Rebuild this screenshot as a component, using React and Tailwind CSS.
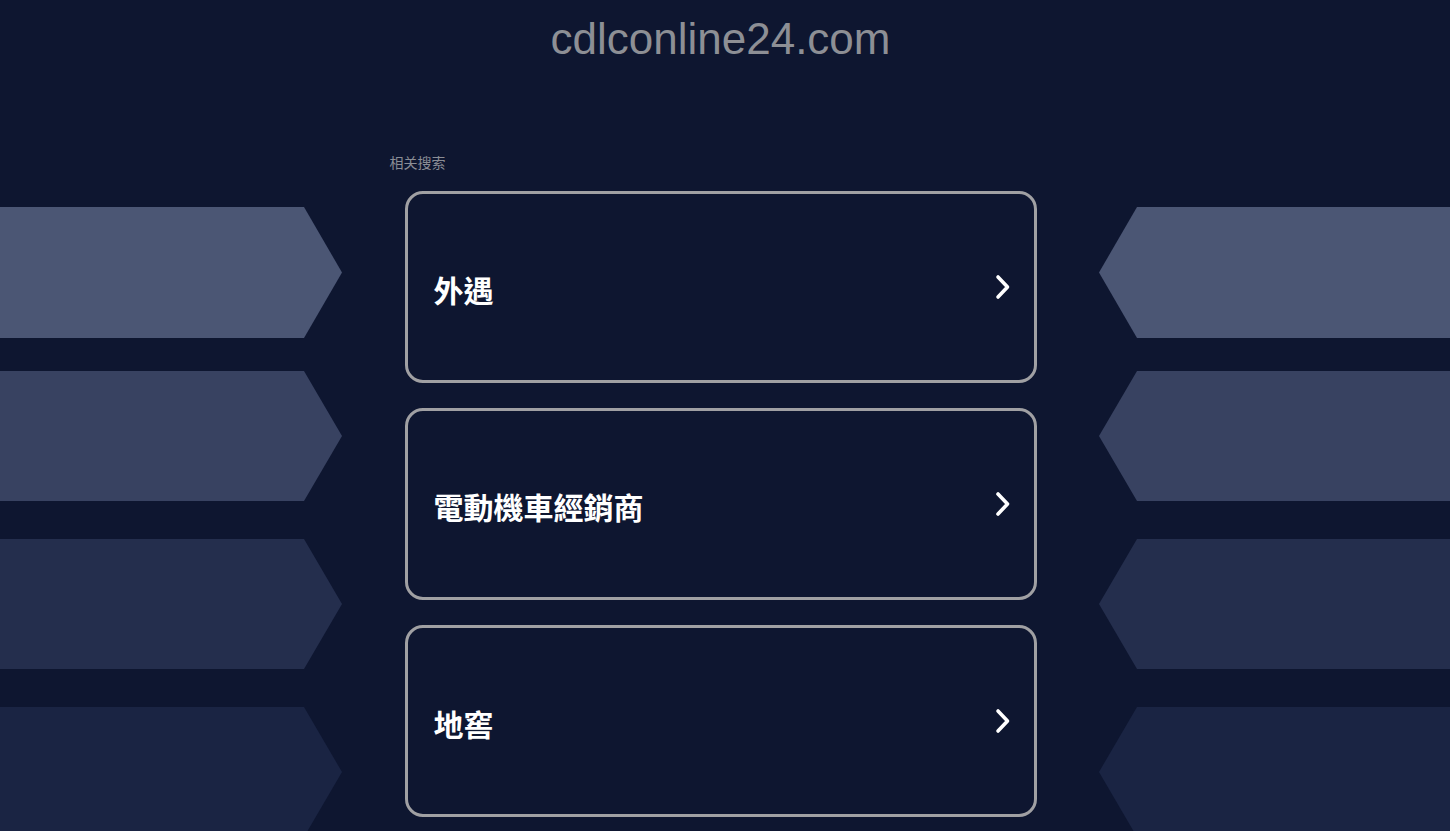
const searches = ['外遇', '電動機車經銷商', '地窖'];

const ChevronIcon = () => (
  <svg width="18" height="26" viewBox="0 0 18 26" fill="none">
    <path d="M4 3 L13.5 13 L4 23" stroke="white" strokeWidth="3.6" strokeLinecap="round" strokeLinejoin="round" />
  </svg>
);

const App = () => {
  return (
    <div className="min-h-screen h-[831px] overflow-hidden bg-[#0e1630] flex">
      {/* left decoration */}
      <div className="w-[342px] shrink-0 pt-[207px] flex flex-col">
        <div className="shrink-0 h-[131px] w-[342px] bg-[#4b5674] [clip-path:polygon(0_0,304px_0,342px_50%,304px_100%,0_100%)]" />
        <div className="shrink-0 mt-[33px] h-[130px] w-[342px] bg-[#384261] [clip-path:polygon(0_0,304px_0,342px_50%,304px_100%,0_100%)]" />
        <div className="shrink-0 mt-[38px] h-[130px] w-[342px] bg-[#242e4d] [clip-path:polygon(0_0,304px_0,342px_50%,304px_100%,0_100%)]" />
        <div className="shrink-0 mt-[38px] h-[130px] w-[342px] bg-[#1a2443] [clip-path:polygon(0_0,304px_0,342px_50%,304px_100%,0_100%)]" />
      </div>

      {/* center */}
      <div className="flex-1 flex flex-col items-center">
        <h1 className="mt-[14px] text-[44px] leading-[50px] text-[#8d8f95] font-['Liberation_Sans',Arial,sans-serif]">
          cdlconline24.com
        </h1>
        <div className="w-[662px] mt-[88px]">
          <p className="text-[14px] leading-[20px] text-[#8a8d95] font-['Noto_Sans_CJK_SC',sans-serif]">相关搜索</p>
          <div className="mt-[19px] flex flex-col gap-[25px] items-center">
            {searches.map((s) => (
              <a
                key={s}
                href="#"
                className="shrink-0 w-[632px] h-[192px] border-[3px] border-[#a0a0a3] rounded-[18px] flex items-center justify-between pl-[26px] pr-[22px]"
              >
                <span className="text-[30px] font-bold text-white mt-[4px] font-['Noto_Sans_CJK_TC',sans-serif]">{s}</span>
                <ChevronIcon />
              </a>
            ))}
          </div>
        </div>
      </div>

      {/* right decoration */}
      <div className="w-[351px] shrink-0 pt-[207px] flex flex-col">
        <div className="shrink-0 h-[131px] w-[351px] bg-[#4b5674] [clip-path:polygon(38px_0,100%_0,100%_100%,38px_100%,0_50%)]" />
        <div className="shrink-0 mt-[33px] h-[130px] w-[351px] bg-[#384261] [clip-path:polygon(38px_0,100%_0,100%_100%,38px_100%,0_50%)]" />
        <div className="shrink-0 mt-[38px] h-[130px] w-[351px] bg-[#242e4d] [clip-path:polygon(38px_0,100%_0,100%_100%,38px_100%,0_50%)]" />
        <div className="shrink-0 mt-[38px] h-[130px] w-[351px] bg-[#1a2443] [clip-path:polygon(38px_0,100%_0,100%_100%,38px_100%,0_50%)]" />
      </div>
    </div>
  );
};

export default App;
